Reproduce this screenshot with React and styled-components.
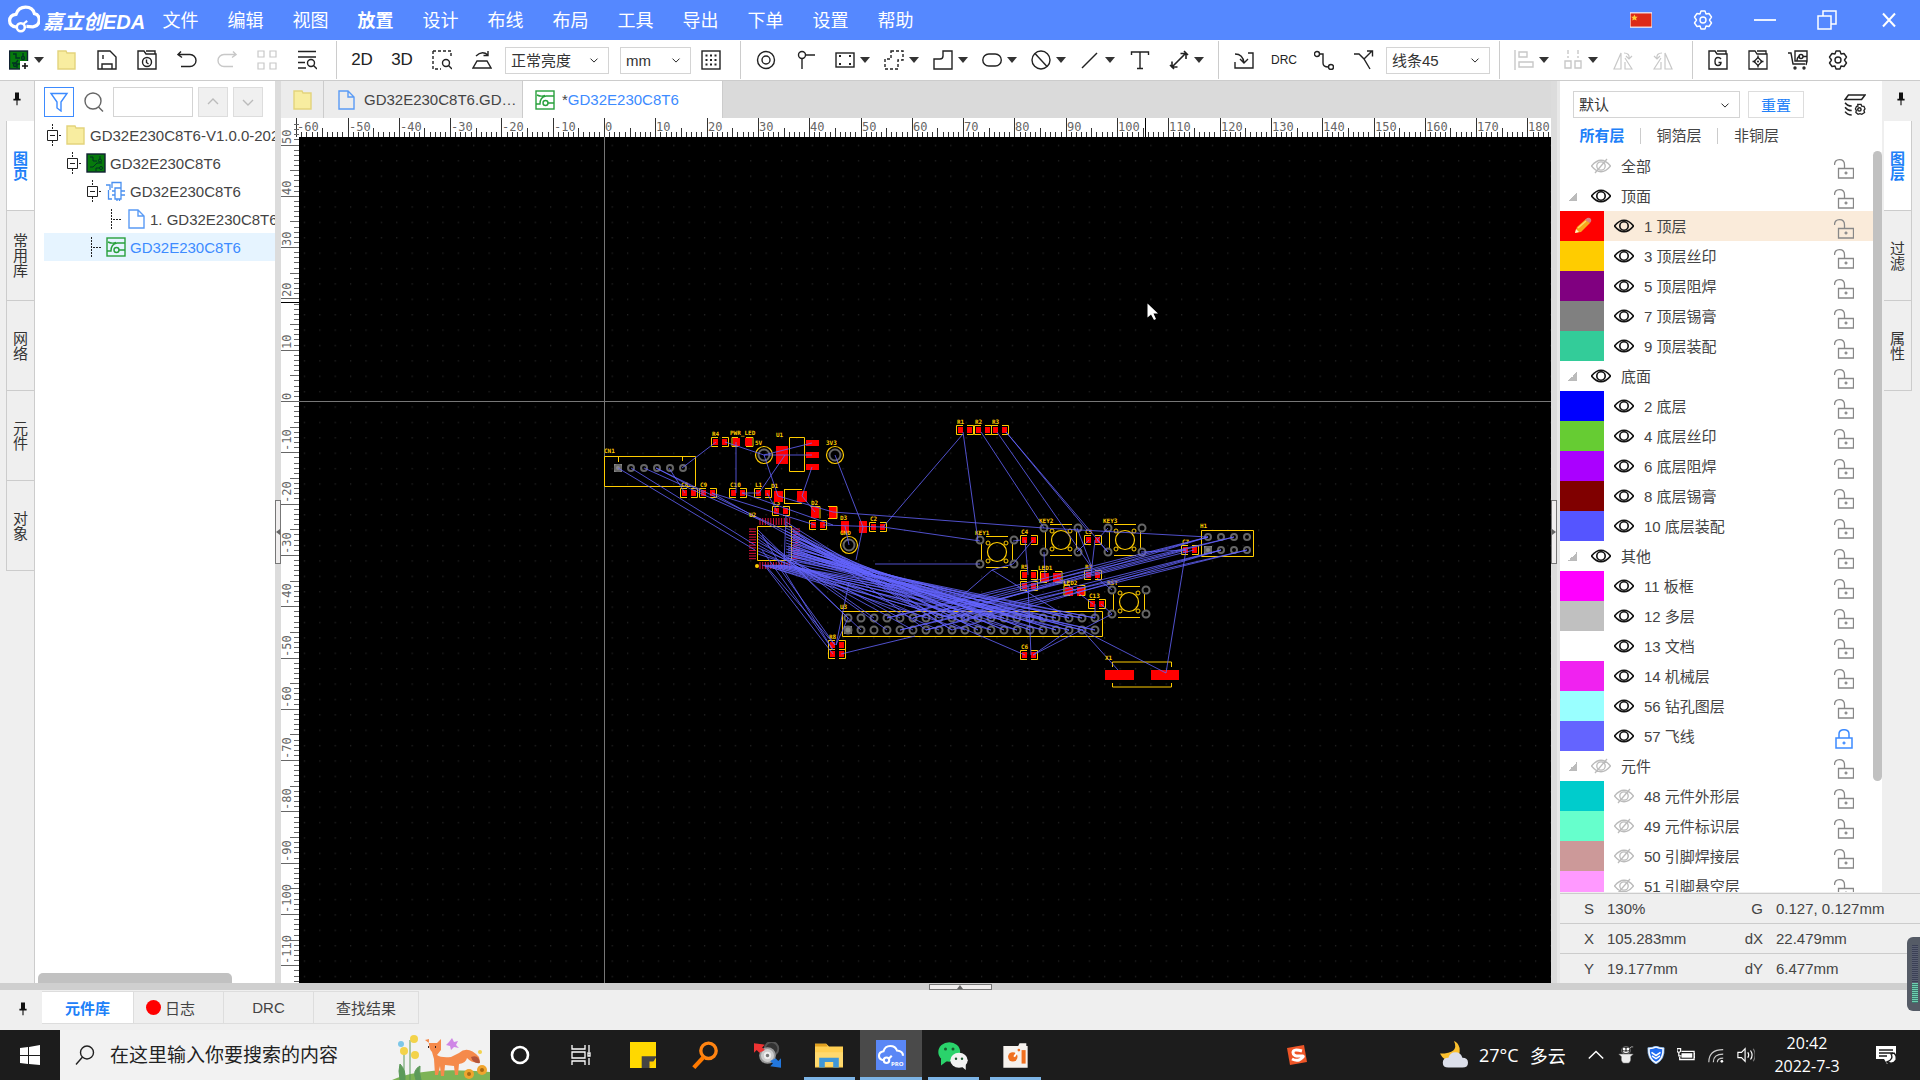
import React, { useState } from 'react';
import styled, { createGlobalStyle } from 'styled-components';

const GlobalStyle = createGlobalStyle`
* { box-sizing: border-box; }
body {
    margin: 0;
    overflow: hidden;
    font-family: "Liberation Sans", "Noto Sans CJK SC", sans-serif;
    font-size: 15px;
    color: #444;
    background: #efefef;
}
button, input, select {
    font-family: inherit;
    font-size: inherit;
    color: inherit;
}
button {
    border: 0;
    padding: 0;
    background: none;
}
ul {
    list-style: none;
    margin: 0;
    padding: 0;
}
svg { display: block; flex: none; }
`

const Page = styled.div`
display: flex;
flex-direction: column;
height: 100vh;
`

/* title bar */
const TitleBar = styled.header`
display: flex;
align-items: center;
height: 40px;
flex: none;
background: #5588ff;
color: white;
`
const Logo = styled.div`
display: flex;
align-items: center;
gap: 3px;
width: 148px;
padding-left: 8px;
font-size: 20px;
font-weight: bold;
font-style: italic;
white-space: nowrap;
`
const MenuItem = styled.button`
width: 65px;
height: 40px;
padding-bottom: 3px;
font-size: 18px;
font-weight: ${p => p.$active ? 'bold' : 'normal'};
`
const WindowButtons = styled.div`
display: flex;
margin-left: auto;
`
const WindowButton = styled.button`
display: grid;
place-items: center;
width: 62px;
height: 40px;
`

/* toolbar */
const Toolbar = styled.div`
display: flex;
align-items: center;
height: 41px;
flex: none;
background: white;
border-bottom: 1px solid #ccc;
color: #222;
`
const Tool = styled.button`
display: grid;
place-items: center;
width: 40px;
height: 36px;
flex: none;
font-size: ${p => p.$small ? '12px' : '17px'};
color: ${p => p.$off ? '#c8c8c8' : '#222'};
`
const MenuTool = styled.button`
display: flex;
align-items: center;
gap: 5px;
height: 36px;
flex: none;
padding: 0 ${p => p.$tight ? '3px' : '5px'} 0 9px;
color: ${p => p.$off ? '#c8c8c8' : '#222'};
`
const Caret = styled.span`
border: 5px solid transparent;
border-top: 6px solid #333;
border-bottom: 0;
`
const Divider = styled.span`
width: 1px;
height: 38px;
margin: 0 5px 0 9px;
background: #ccc;
flex: none;
`
const SelectWrap = styled.label`
display: flex;
align-items: center;
position: relative;
flex: none;
width: ${p => p.$w}px;
margin-left: ${p => p.$gap || 0}px;
svg { position: absolute; right: 8px; pointer-events: none; }
`
const Select = styled.select`
appearance: none;
width: 100%;
height: 27px;
padding: 0 5px;
border: 1px solid #d4d4d4;
background: white;
color: #333;
`

/* main area */
const Main = styled.div`
display: flex;
flex: 1;
min-height: 0;
`
const SideTabs = styled.nav`
display: flex;
flex-direction: column;
flex: none;
width: ${p => p.$right ? '38px' : '35px'};
padding: ${p => p.$right ? '0 8px 0 2px' : '0 0 0 6px'};
background: #efefef;
border-right: ${p => p.$right ? '0' : '1px solid #ccc'};
`
const PinBox = styled.button`
display: grid;
place-items: center;
height: 40px;
width: 28px;
padding: ${p => p.$right ? '0 0 6px 6px' : '0 7px 6px 0'};
`
const SideTab = styled.button`
display: grid;
place-items: center;
height: 90px;
width: 28px;
padding-right: 3px;
border: solid #ccc;
border-width: 0 ${p => p.$right ? '1px' : 0} 1px ${p => p.$right ? 0 : '1px'};
background: ${p => p.$active ? 'white' : '#efefef'};
color: ${p => p.$active ? '#2080f8' : '#333'};
font-weight: ${p => p.$active ? 'bold' : 'normal'};
writing-mode: vertical-rl;
text-orientation: upright;
line-height: 16px;
`
const TreePanel = styled.aside`
display: flex;
flex-direction: column;
width: 240px;
flex: none;
padding: 6px 0 0 9px;
background: white;
overflow: hidden;
`
const TreeSearch = styled.div`
display: flex;
align-items: center;
gap: 5px;
height: 30px;
margin-bottom: 4px;
`
const FilterButton = styled.button`
display: grid;
place-items: center;
width: 30px;
height: 30px;
border: 1px solid #3d8bff;
color: #3d8bff;
`
const SearchIcon = styled.span`
padding: 0 4px 0 5px;
color: #666;
`
const SearchBox = styled.input`
width: 80px;
height: 30px;
border: 1px solid #d4d4d4;
`
const StepButton = styled.button`
display: grid;
place-items: center;
width: 30px;
height: 30px;
background: #f0f0f0;
border: 1px solid #ddd;
color: #bbb;
`
const TreeRow = styled.li`
display: flex;
align-items: center;
gap: 4px;
height: 28px;
padding-left: ${p => 2 + p.$level * 20}px;
white-space: nowrap;
background: ${p => p.$active ? '#e6f4ff' : 'white'};
color: ${p => p.$active ? '#3d8bff' : '#444'};
`
const ScrollX = styled.div`
width: 84%;
height: 10px;
margin: auto 0 0 -6px;
background: #c1c1c1;
border-radius: 5px 5px 0 0;
`
const Splitter = styled.div`
display: grid;
place-items: center;
width: ${p => p.$w}px;
flex: none;
background: #dcdcdc;
border-right: ${p => p.$w > 6 ? '3px solid #e8e8e8' : '0'};
`
const Handle = styled.button`
display: grid;
place-items: center;
width: ${p => p.$flat ? '63px' : '6px'};
height: ${p => p.$flat ? '6px' : '64px'};
border: 1px solid #777;
background: #f0eeee;
`
const Arrow = styled.span`
border: 3px solid transparent;
${p => p.$dir === 'left' && 'border-right: 4px solid #666; border-left: 0;'}
${p => p.$dir === 'right' && 'border-left: 4px solid #666; border-right: 0;'}
${p => p.$dir === 'up' && 'border-bottom: 4px solid #666; border-top: 0;'}
`

/* document area */
const Work = styled.section`
display: flex;
flex-direction: column;
flex: 1;
min-width: 0;
`
const DocTabs = styled.div`
display: flex;
height: 37px;
flex: none;
background: #dadada;
`
const DocTab = styled.button`
display: flex;
align-items: center;
gap: ${p => p.$active ? '7px' : '8px'};
width: ${p => p.$w}px;
padding-left: 12px;
white-space: nowrap;
border-right: 1px solid #ccc;
background: ${p => p.$active ? 'white' : '#ececec'};
em { font-style: normal; color: #3d8bff; }
`
const Sheet = styled.div`
display: grid;
grid-template: 19px 1fr / 18px 1fr;
flex: 1;
min-height: 0;
overflow: hidden;
background: white;
font-family: "DejaVu Sans Mono", monospace;
font-size: 12px;
svg { width: 100%; height: 100%; }
`
const TopRuler = styled.svg`
grid-column: 1 / 3;
`
const SideRuler = styled.svg`
overflow: visible;
`
const Board = styled.svg`
background: black;
font-weight: bold;
z-index: 1;
`

/* layer panel */
const LayerPanel = styled.aside`
display: flex;
flex-direction: column;
width: 322px;
flex: none;
background: white;
`
const LayerTop = styled.div`
display: flex;
align-items: center;
gap: 8px;
height: 27px;
margin: 10px 0 4px 13px;
color: #222;
`
const ResetButton = styled.button`
width: 56px;
height: 27px;
margin-right: 32px;
border: 1px solid #ddd;
color: #2080f8;
`
const LayerTabs = styled.div`
display: flex;
align-items: center;
height: 29px;
padding: 0 0 2px 4px;
`
const LayerTab = styled.button`
width: 77px;
height: 16px;
line-height: 16px;
border-right: ${p => p.$last ? 0 : '1px solid #ccc'};
color: ${p => p.$active ? '#2080f8' : '#444'};
font-weight: ${p => p.$active ? 'bold' : 'normal'};
`
const LayerScroll = styled.div`
display: flex;
flex: 1;
min-height: 0;
overflow: hidden;
`
const LayerList = styled.ul`
flex: 1;
`
const LayerRow = styled.li`
display: flex;
align-items: center;
height: 30px;
padding-right: 19px;
background: ${p => p.$active ? '#faebda' : 'white'};
`
const Swatch = styled.span`
display: grid;
place-items: center;
width: 44px;
height: 30px;
background: ${p => p.$color};
`
const Fold = styled.span`
width: 21px;
padding-left: 8px;
i {
    display: block;
    width: 9px;
    height: 9px;
    background: linear-gradient(135deg, transparent 50%, #bbb 50%);
}
`
const EyeButton = styled.button`
display: grid;
place-items: center;
width: 40px;
height: 30px;
padding-bottom: 1px;
color: ${p => p.$off ? '#bbb' : '#111'};
`
const LayerName = styled.span`
padding-bottom: 2px;
`
const LockButton = styled.button`
margin-left: auto;
padding-top: 6px;
color: ${p => p.$locked ? '#3d8bff' : '#888'};
`
const ScrollY = styled.div`
width: 9px;
height: 85%;
background: #c1c1c1;
border-radius: 5px;
`
const RightColumn = styled.div`
display: flex;
flex-direction: column;
flex: none;
`
const RightTop = styled.div`
display: flex;
flex: 1;
min-height: 0;
`
const Status = styled.dl`
display: grid;
grid-template-columns: 37px 120px 49px 1fr;
margin: 0;
padding-top: 1px;
background: #efefef;
dt, dd {
    margin: 0;
    line-height: 29px;
    border-top: 1px solid #ccc;
}
dt { text-align: right; padding-right: 3px; }
dd { padding-left: 10px; }
`

/* bottom */
const BottomSplit = styled.div`
display: flex;
justify-content: center;
align-items: center;
height: 7px;
flex: none;
background: #cfcfcf;
`
const BottomTabs = styled.div`
display: flex;
height: 40px;
flex: none;
padding: 1px 0 6px 0;
background: #efefef;
`
const BottomPin = styled.button`
display: grid;
place-items: center;
width: 42px;
padding-left: 4px;
`
const BottomTab = styled.button`
display: flex;
justify-content: center;
align-items: center;
gap: 4px;
width: ${p => p.$w}px;
padding-bottom: 1px;
border: 1px solid #ddd;
border-left: 0;
background: ${p => p.$active ? 'white' : '#efefef'};
color: ${p => p.$active ? '#2080f8' : '#444'};
font-weight: ${p => p.$active ? 'bold' : 'normal'};
`
const RedDot = styled.i`
width: 15px;
height: 15px;
border-radius: 50%;
background: #f00;
margin-left: -16px;
`
const Taskbar = styled.footer`
display: flex;
height: 50px;
flex: none;
background: #1c1c1c;
color: white;
font-family: "Open Sans", "Noto Sans CJK SC", sans-serif;
`
const TaskButton = styled.button`
display: grid;
place-items: center;
width: ${p => p.$w || 62}px;
height: 50px;
background: ${p => p.$active ? '#4a4a4a' : 'none'};
box-shadow: ${p => p.$active ? 'inset 0 -3px #7cb4e6' : 'none'};
`
const RunMark = styled.span`
display: grid;
place-items: center;
width: 51px;
height: 50px;
border-bottom: 3px solid #7cb4e6;
padding-top: 3px;
`
const SearchField = styled.label`
display: flex;
align-items: center;
width: 430px;
padding-left: 15px;
background: #f2f2f2;
color: #222;
font-size: 19px;
input {
    flex: 1;
    min-width: 0;
    height: 40px;
    margin-left: 15px;
    padding: 0;
    border: 0;
    background: none;
}
input::placeholder { color: #222; opacity: 1; }
`
const Tray = styled.div`
display: flex;
align-items: center;
margin-left: auto;
font-size: 18px;
`
const TraySpace = styled.span`
width: 113px;
`
const TrayButton = styled.button`
display: grid;
place-items: center;
width: 30px;
height: 50px;
`
const Weather = styled.div`
display: flex;
align-items: center;
gap: 11px;
width: 141px;
white-space: nowrap;
`
const Clock = styled.time`
width: 90px;
margin-left: 1px;
font-size: 16px;
line-height: 23px;
text-align: center;
`
const Meter = styled.div`
position: fixed;
right: 0;
bottom: 69px;
width: 13px;
height: 74px;
padding: 8px 2px 8px 5px;
border-radius: 6px 0 0 6px;
background: #555b66;
i {
    display: block;
    height: 100%;
    background: repeating-linear-gradient(#3b4055 0 1px, #5a5f72 1px 2px);
}
i::after {
    content: '';
    display: block;
    height: 20px;
    transform: translateY(38px);
    background: repeating-linear-gradient(#6fd0b0 0 1px, #3d7a70 1px 2px);
}
`
const Green = styled.span`
color: #28a03c;
`

const ICONS = {
    newBoard: <>
        <rect x="0.5" y="1" width="18" height="18" fill="#067a0c" stroke="#123" />
        <path d="M4 4h3v4h4M14 3v4M3 13h4l2-3M8 18v-4h3" stroke="#032" />
        <circle cx="14" cy="8" r="1.5" stroke="#032" />
        <circle cx="6" cy="15" r="1.5" stroke="#032" />
        <path d="M11 11h9v9h-9z" fill="white" stroke="none" />
        <path d="M16 13v6M13 16h6" strokeWidth="1.6" stroke="#111" />
    </>,
    board: <>
        <rect x="1" y="1" width="18" height="18" fill="#067a0c" stroke="#123" />
        <path d="M4 4h3v4h4M14 3v3M4 14h3l4-4h5M10 18v-3h3" stroke="#032" strokeWidth="1" />
        <circle cx="14" cy="7.5" r="1.5" stroke="#032" strokeWidth="1" />
        <circle cx="15" cy="15" r="1.5" stroke="#032" strokeWidth="1" />
    </>,
    folder: <path d="M1 4V1h8l1 2h8v16H1z" fill="#f8eda0" stroke="#e3d37c" />,
    save: <path d="M1 1h12l6 6v12H1zM5 19v-5h10v5M6 5v4" />,
    history: <>
        <path d="M1 19V1h6l2 3h10v15zM9 1h9v3" />
        <circle cx="10" cy="12" r="4.5" />
        <path d="M9.5 9.5v3l2 1.500" />
    </>,
    undo: <path d="M4 1.500L1 4.500l4 3M1 4.500h12a6 6 0 0 1 0 12H4" />,
    redo: <path d="M16 1.500l3 3-4 3M19 4.500H7a6 6 0 0 0 0 12h9" />,
    tiles: <path d="M1 1h6v6H1zM13 1h6v6h-6zM1 13h6v6H1zM13 13h6v6h-6z" strokeWidth="1.200" />,
    find: <>
        <path d="M1 1.500h18M1 7h18M1 12.500h7M1 18h8" />
        <circle cx="14" cy="13" r="3.500" />
        <path d="M16.500 15.500L20 19" />
    </>,
    marquee: <>
        <path d="M1 1h18v7M1 1v18h8" strokeDasharray="3 2" />
        <circle cx="14" cy="13" r="3.500" />
        <path d="M16.500 15.500L20 19" />
    </>,
    rotate: <path d="M5 11h10l4 7H1zM4 6q6-6 12-1M16 1v4.500h-4.500" />,
    grid: <>
        <rect x="1" y="1" width="18" height="18" />
        <path d="M4.500 5.500h11M4.500 10h11M4.500 14.500h11" strokeWidth="2" strokeDasharray="2 2.500" />
    </>,
    via: <><circle cx="10" cy="10" r="8.500" /><circle cx="10" cy="10" r="4" /></>,
    pad: <><circle cx="6" cy="5" r="3.500" /><path d="M6 8.500V19M9.500 5H19" /></>,
    fill: <>
        <rect x="1" y="3" width="18" height="14" />
        <path d="M4 6h2M14 6h2M4 14h2M14 14h2" strokeWidth="2" />
    </>,
    dashedPoly: <path d="M7 1h12v9h-5v9H1V9h6z" strokeDasharray="3 2" />,
    poly: <path d="M10 1h9v18H1V9h6q3 0 3-3z" />,
    round: <rect x="0.800" y="4" width="18.500" height="12" rx="6" />,
    forbid: <><circle cx="10" cy="10" r="9" /><path d="M4 3.500l12 13" /></>,
    line: <path d="M2 18L17 3" />,
    text: <path d="M1.500 5V2h17v3M10 2v16M7 18.500h6" />,
    measure: <path d="M3 17L17 3M11.500 3.500H17V9M3 11.500V17h5.500M1 15l4 4M15 1l4 4" strokeWidth="1.600" />,
    importIn: <path d="M1 12v6h18V3h-5M1 4q8 0 9 9M6 9l4 4 4-4" />,
    route: <>
        <circle cx="3" cy="4" r="2.500" /><circle cx="17" cy="17" r="2.500" />
        <path d="M5.500 4H9v9q0 4 5.500 4" />
    </>,
    branch: <path d="M0 4h5l5 5 6 10M10 9l8-8M13 1h5.500v5.500" />,
    align: <path d="M1 0v20M5 2h8v5H5zM5 12h14v5H5z" />,
    distribute: <path d="M2 11h6v7H2zM12 11h6v7h-6zM5 0v4M15 0v4M5 6v2M15 6v2" />,
    flipL: <path d="M8 3v16H1zM12 12v7h7L12 8M11 3q6 0 5 6M13 6l3 3 3-3" strokeWidth="1.200" />,
    flipR: <path d="M12 3v16h7zM8 12v7H1L8 8M9 3q-6 0-5 6M7 6L4 9 1 6" strokeWidth="1.200" />,
    gerber: <path d="M1 19V1h6l2 3h10v15zM9 1h9v3M13 9q-1-1.500-3-1.500-3 0-3 4t3 4q3 0 3-3h-2.500" />,
    target: <>
        <path d="M1 19V1h6l2 3h10v15zM9 1h9v3M10 5.500v3M10 14.500v3M4.500 11.500h3M12.500 11.500h3" strokeWidth="1.300" />
        <path d="M10 7.500l4 4-4 4-4-4z" strokeWidth="1.300" />
        <circle cx="10" cy="11.500" r="1" fill="#222" stroke="none" />
    </>,
    cart: <>
        <path d="M0 3h3l2 11h12M7 1h12v10H7zM19 11l-1 4" />
        <circle cx="13" cy="6.500" r="2" /><path d="M15 6.500h4M9 11q0-4 3-5" />
        <circle cx="7" cy="18" r="1" /><circle cx="16" cy="18" r="1" />
    </>,
    gear: <>
        <path d="M8 1h4l1 3 3-.5 2.500 3.500-2 3 2 3-2.500 3.500-3-.5-1 3H8l-1-3-3 .5L1.500 13l2-3-2-3L4 3.500 7 4z" strokeLinejoin="round" />
        <circle cx="10" cy="10" r="3" />
    </>,
    layers: <>
        <path d="M1 5l3-4h15l-3 4zM1 8q2 3 6 3M1 12q2 3 6 3M1 16q2 3 6 3" />
        <circle cx="14" cy="14" r="1.500" />
        <path d="M12.500 9.500h3l.6 1.500 2 .2 1 2.300-1 1.300.6 2-2.500 1.700-1.700-.6-1.700.6-2-1.700.4-2-.8-1.300 1-2.300 1.300-.2z" strokeWidth="1.200" />
    </>,
    filter: <path d="M2 1.500h16l-6 8.500v9l-4-3v-6z" />,
    search: <><circle cx="9" cy="9" r="8" /><path d="M14.500 15L19 19.500" /></>,
    up: <path d="M5 12l5-5 5 5" />,
    down: <path d="M5 8l5 5 5-5" />,
    file: <path d="M3 1h9l6 6v12H3zM12 1v6h6" stroke="#5a9bf5" />,
    sch: <path d="M6 7V1.500h9V7M0 4h4v5M2.500 9v9H6M9 7h6v11H9zM6 10h3M6 14h3M15 10h4M15 14h4M11 18v2M13.500 18v2" stroke="#4a90f0" strokeWidth="1.300" />,
    pcb: <>
        <rect x="1" y="1" width="18" height="18" />
        <path d="M1 14h4q0-7 6-8h8M2 5q4 2 8 .5M13 13h6" />
        <circle cx="10.500" cy="13" r="2.500" />
    </>,
    eye: <><path d="M0.500 10Q10-1.500 19.500 10 10 21.500.500 10z" strokeWidth="1.600" /><circle cx="10" cy="10" r="4.200" strokeWidth="1.600" /></>,
    eyeOff: <><path d="M0.500 10Q10-1.500 19.500 10 10 21.500.500 10zM4 17L16 3" strokeWidth="1.300" /><circle cx="10" cy="10" r="4.200" strokeWidth="1.300" /></>,
    unlock: <><path d="M4.500 9.500h15v9.500h-15zM0.500 6q0-5.300 5-5.300t5 5.300v3.500" strokeWidth="1.300" /><path d="M12 12.500v3M10.500 14h3" /></>,
    lock: <><path d="M2 9h16v10H2zM5 9V5q0-4.300 5-4.300T15 5v4" strokeWidth="1.500" /><path d="M10 12.500v3M8.500 14h3" /></>,
    pin: <><path d="M7.500 3h5v8h2v2h-9v-2h2z" fill="#111" stroke="none" /><path d="M10 12v7" stroke="#111" /></>,
    cloud: <>
        <path d="M5.500 14.500Q1 14 1 10.500T5 6.500Q6.500 2 11 2t5.500 4q3 .5 3 4t-4 4.300l-4-.3" strokeWidth="2" />
        <circle cx="8" cy="14.500" r="2.500" strokeWidth="1.600" /><path d="M9.500 12.500l2.500-2" />
    </>,
    minimize: <path d="M0 10h20" strokeWidth="1.600" />,
    restore: <path d="M1 6h13v13H1zM6 6V1h13v13h-5" strokeWidth="1.500" />,
    close: <path d="M4 3.500l12 13M16 3.500l-12 13" strokeWidth="2" />,
    flag: <><rect x="0" y="3.500" width="20" height="13" fill="#dd2a18" stroke="#fff" strokeWidth="1" /><path d="M4 5l1 2h2l-1.500 1.500.5 2L4 9.500 2 10.500l.5-2L1 7h2z" fill="#fc3" stroke="none" /></>,
    windows: <path d="M0 3l8-1v8H0zM9 2l11-2v10H9zM0 11h8v8l-8-1zM9 11h11v9L9 19z" fill="#fff" stroke="none" />,
    magnify: <><circle cx="12" cy="7.500" r="6.500" /><path d="M7.500 12L1 19.500" /></>,
    cortana: <circle cx="10" cy="10" r="8" strokeWidth="2.600" />,
    taskView: <path d="M1 0v4h13V0M1 20v-4h13v4M1 7h13v6H1zM18 0v7M18 13v7M17 8h2v3h-2z" strokeWidth="1.300" />,
    chevUp: <path d="M2 14l8-8 8 8" strokeWidth="1.600" />,
    penguin: <>
        <ellipse cx="10" cy="5" rx="5" ry="4.500" fill="#333" stroke="#999" strokeWidth="0.600" />
        <path d="M14 3q1-3 4-2" stroke="#aaa" strokeWidth="1" />
        <path d="M2 9h16l-3 3q1 5-2 7H7q-3-2-2-7z" fill="#eee" stroke="#777" strokeWidth="0.600" />
        <path d="M7 6q3 2 6 0" stroke="#fff" /><circle cx="8" cy="3.500" r="0.800" fill="#fff" /><circle cx="12" cy="3.500" r="0.800" fill="#fff" />
    </>,
    shield: <>
        <path d="M10 0q4 2 9 2 1 13-9 18Q0 15 1 2q5 0 9-2z" fill="#fff" stroke="#8bc0ff" strokeWidth="0.800" />
        <path d="M10 2q3 1.500 7 1.500.5 10-7 14-7.500-4-7-14Q7 3.500 10 2z" fill="#1f6cf0" stroke="none" />
        <path d="M5 7l5 3.500L15 7M5.500 11l4.500 3 4.500-3" stroke="#fff" strokeWidth="1.800" />
    </>,
    battery: <><path d="M5 6h14v9H3v-3M19 8.500h1.500v4H19" /><path d="M5 8h12v5H5z" fill="#fff" stroke="none" /><path d="M0 3h4v3q-2 2-4 0zM2 7v4h3" /></>,
    wifi: <><path d="M2 18Q2 4 18 4M7 18q0-9 11-9M11.500 18q0-4.500 6.500-4.500" strokeWidth="1.300" stroke="#ccc" /><circle cx="16.500" cy="17" r="1.500" fill="#fff" stroke="none" /></>,
    speaker: <><path d="M1 7h4l4-4v14l-4-4H1zM12 7q2 3 0 6M15 5q3.500 5 0 10" strokeWidth="1.300" /><path d="M18 3q4.500 7 0 14" strokeWidth="1.300" stroke="#777" /></>,
    notice: <><path d="M0 1h20v13h-5l-4 5-3-5H0z" fill="#fff" stroke="none" /><path d="M3 5h14M3 8h14M3 11h8" stroke="#1c1c1c" /><path d="M15 9q3 5-4 8 6 3 9-2 1-4-2-7z" fill="#fff" stroke="#1c1c1c" /></>,
    note: <><path d="M0 0h20v20H0z" fill="#ffd800" stroke="none" /><path d="M9 20v-9h11v1l-5 8z" fill="#444" stroke="none" /><path d="M15 20v-5h5z" fill="#fc0" stroke="none" /></>,
    everything: <><circle cx="12.500" cy="7" r="5.500" stroke="#ff8412" strokeWidth="2.400" /><path d="M9 11.500L2 19" stroke="#ff7a00" strokeWidth="3" /></>,
    sync: <>
        <circle cx="13" cy="5" r="5" fill="#333" stroke="#555" />
        <circle cx="10" cy="10" r="5.500" fill="#ccc" stroke="#999" /><circle cx="10" cy="10" r="2" fill="#777" stroke="#eee" />
        <path d="M0 1l8 1-2 2 2 2-4 2-2-2-2 2z" fill="#e33" stroke="none" />
        <path d="M20 19l-8-1 2-2-2-2 4-2 2 2 2-2z" fill="#27d" stroke="none" />
    </>,
    explorer: <>
        <path d="M0 2h8l2 2h10v15H0z" fill="#ffcf52" stroke="none" /><path d="M0 2h8l1 2H0z" fill="#e0a020" stroke="none" />
        <path d="M0 8h20v10H0z" fill="#ffd96e" stroke="none" />
        <path d="M3 19v-7h14v7h-4v-4H7v4z" fill="#3f97d8" stroke="none" />
    </>,
    edaPro: <>
        <rect width="20" height="20" fill="#5a87f6" stroke="none" />
        <path d="M5 13.500q-3-.5-3-3t3-3Q6 4 9.500 4T14 7q4 .5 4 3.500" stroke="#fff" />
        <circle cx="7" cy="13.500" r="1.800" stroke="#fff" /><path d="M8.500 12.500l2-2" stroke="#fff" />
        <text x="10" y="17" fontSize="4" fontWeight="bold" fill="#fff" stroke="none">PRO</text>
    </>,
    wechat: <>
        <ellipse cx="7.500" cy="8" rx="7.300" ry="6.500" fill="#2ad36b" stroke="none" /><path d="M2 12v5l4-3z" fill="#2ad36b" stroke="none" />
        <ellipse cx="14" cy="13.500" rx="5.800" ry="5" fill="#f2f2f2" stroke="none" /><path d="M15 17l3.500 3v-4z" fill="#f2f2f2" stroke="none" />
        <g fill="#1a5a30" stroke="none"><circle cx="5" cy="6" r="1" /><circle cx="10" cy="6" r="1" /><circle cx="12" cy="12.500" r="0.800" /><circle cx="16" cy="12.500" r="0.800" /></g>
    </>,
    camera: <>
        <path d="M1 3h11l1-2h5v2h1v16H1z" fill="#f6f2ee" stroke="none" />
        <circle cx="8" cy="11" r="3.500" fill="#f07020" stroke="none" /><path d="M11 8l-2 3" stroke="#fff" />
        <path d="M14.500 6h3v10h-3z" fill="#f07020" stroke="none" /><circle cx="12.500" cy="6" r="1" fill="#f07020" stroke="none" />
    </>,
    sogou: <>
        <path d="M0 3l17-3 3 17-17 3z" fill="#ee5527" stroke="none" />
        <path d="M15 6Q6 3.500 6 7.500T13 11t-1 4q-3 1-7-1" stroke="#fff" strokeWidth="3" />
    </>,
    moon: <>
        <path d="M10 0q4 9-10 9 3 6 9 5 6-3 5-9Q13 1 10 0z" fill="#fbc02d" stroke="none" />
        <path d="M6 19q-4 0-4-3.500T6 12q1-4 5-4t5 4q4 0 4 3.500T16 19z" fill="#dcdfea" stroke="none" />
    </>,
    pencil: <>
        <path d="M3 17l2-6L14 3l4 4-9 9z" fill="#f7a71c" stroke="none" />
        <path d="M13 4l2-2q2-1 4 1 1 2-1 4z" fill="#d98080" stroke="none" />
        <path d="M3 17l1-4 3 3z" fill="#fff0c8" stroke="none" /><path d="M6 12l8-7" stroke="#ffd76a" />
    </>,
}

const Icon = ({ name, size = 20 }) => (
    <svg width={size} height={size} viewBox="0 0 20 20" fill="none" stroke="currentColor" strokeWidth="1.4" aria-hidden="true">
        {ICONS[name]}
    </svg>
)

const PcbIcon = () => <Green><Icon name="pcb" /></Green>

const Dropdown = ({ label, value, width, gap }) => (
    <SelectWrap $w={width} $gap={gap}>
        <Select aria-label={label} defaultValue={value}>
            <option>{value}</option>
        </Select>
        <Icon name="down" size={14} />
    </SelectWrap>
)

const MENU = ['文件', '编辑', '视图', '放置', '设计', '布线', '布局', '工具', '导出', '下单', '设置', '帮助']

const DRAW_TOOLS = ['fill', 'dashedPoly', 'poly', 'round', 'forbid', 'line']

const LAYERS = [
    { name: '全部', group: true, top: true, off: true },
    { name: '顶面', group: true },
    { name: '1 顶层', color: '#ff0000' },
    { name: '3 顶层丝印', color: '#ffcc00' },
    { name: '5 顶层阻焊', color: '#800080' },
    { name: '7 顶层锡膏', color: '#808080' },
    { name: '9 顶层装配', color: '#33cc99' },
    { name: '底面', group: true },
    { name: '2 底层', color: '#0000ff' },
    { name: '4 底层丝印', color: '#66cc33' },
    { name: '6 底层阻焊', color: '#aa00ff' },
    { name: '8 底层锡膏', color: '#800000' },
    { name: '10 底层装配', color: '#5555ff' },
    { name: '其他', group: true },
    { name: '11 板框', color: '#ff00ff' },
    { name: '12 多层', color: '#c0c0c0' },
    { name: '13 文档', color: '#ffffff' },
    { name: '14 机械层', color: '#f022f0' },
    { name: '56 钻孔图层', color: '#99ffff' },
    { name: '57 飞线', color: '#6464ff', locked: true },
    { name: '元件', group: true, off: true },
    { name: '48 元件外形层', color: '#00cccc', off: true },
    { name: '49 元件标识层', color: '#66ffcc', off: true },
    { name: '50 引脚焊接层', color: '#cc9999', off: true },
    { name: '51 引脚悬空层', color: '#ff99ff', off: true },
]

/* rulers: one millimetre is UNIT pixels on screen */
const UNIT = 5.13
const range = (a, b) => Array.from({ length: b - a + 1 }, (_, i) => a + i)

function HorizontalRuler() {
    return (
        <TopRuler>
            {range(-60, 400).map(n => {
                const x = Math.round(323 + n * UNIT) + 0.5
                const len = n % 10 === 0 ? 19 : n % 5 === 0 ? 9 : 5
                return <path key={n} d={`M${x} 19v${-len}`} stroke="#333" />
            })}
            {range(-6, 18).map(n => (
                <text key={n} x={Math.round(324 + n * 10 * UNIT)} y="13" fill="#666">{n * 10}</text>
            ))}
            <path d="M864.5 0v19" stroke="#000" />
        </TopRuler>
    )
}

function VerticalRuler() {
    return (
        <SideRuler>
            {range(-200, 54).map(n => {
                const y = Math.round(264 - n * UNIT) + 0.5
                const len = n % 10 === 0 ? 18 : n % 5 === 0 ? 9 : 5
                return <path key={n} d={`M18 ${y}h${-len}`} stroke="#666" />
            })}
            {range(-11, 5).map(n => (
                <text key={n} transform={`translate(10 ${Math.round(263 - n * 10 * UNIT)}) rotate(-90)`} fill="#666">{n * 10}</text>
            ))}
            <path d="M0 165.5h18" stroke="#000" />
        </SideRuler>
    )
}

/* board parts, in screen pixels */
const CHIPS = [
    [720, 442, 'R4'], [689, 493, 'C8'], [708, 493, 'C9'], [738, 493, 'C10'], [763, 493, 'L1'],
    [781, 511, 'C3'], [818, 525, ''], [878, 527, 'C2'], [837, 645, 'R8'], [837, 654, ''],
    [965, 430, 'R1'], [983, 430, 'R2'], [1000, 430, 'R3'], [1029, 540, 'C4'], [1093, 540, 'C5'],
    [1029, 575, 'R5'], [1029, 586, ''], [1093, 575, 'R7'], [1097, 604, 'C13'], [1190, 550, 'C7'],
    [1029, 655, 'C6'],
]

const PADS = [
    [733, 438, 7, 8], [745, 438, 7, 8], [776, 446, 12, 18], [806, 440, 13, 6], [806, 452, 13, 6], [806, 464, 13, 6],
    [774, 491, 9, 11], [797, 491, 10, 11], [811, 507, 8, 11], [829, 507, 8, 11], [841, 521, 8, 12], [859, 521, 8, 12],
    [1041, 573, 8, 9], [1053, 573, 8, 9], [1065, 587, 8, 9], [1077, 587, 8, 9],
    [1105, 670, 29, 10], [1151, 670, 28, 10],
]

const KEYS = [[997, 552, 'KEY1'], [1061, 540, 'KEY2'], [1125, 540, 'KEY3'], [1129, 602, 'RST']]

const TESTPOINTS = [[764, 455, '5V'], [835, 455, '3V3'], [849, 545, 'GND']]

const LABELS = [
    [604, 453, 'CN1'], [730, 435, 'PWR_LED'], [776, 437, 'U1'], [771, 488, 'D1'], [811, 505, 'D2'],
    [840, 520, 'D3'], [749, 517, 'U2'], [840, 609, 'U3'], [1038, 570, 'LED1'], [1063, 585, 'LED2'],
    [1200, 528, 'H1'], [1105, 660, 'X1'],
]

const HEADER_X = range(0, 19).map(i => 848 + i * 13)

const NETS = [
    [682, 468, 716, 442], [725, 442, 764, 455], [736, 442, 736, 493], [764, 455, 812, 443], [764, 455, 778, 496],
    [785, 455, 759, 493], [764, 455, 812, 455], [812, 467, 802, 496], [835, 455, 863, 527], [618, 468, 755, 550],
    [631, 468, 755, 545], [644, 468, 760, 520], [656, 468, 845, 560], [656, 468, 704, 493], [669, 468, 685, 493],
    [712, 493, 815, 525], [712, 493, 860, 575], [742, 493, 759, 493], [767, 493, 777, 511], [742, 493, 833, 525],
    [802, 496, 815, 512], [778, 496, 833, 512], [833, 512, 1044, 528], [1044, 528, 1208, 537], [883, 527, 980, 541],
    [823, 525, 883, 527], [883, 527, 963, 434], [849, 545, 845, 526], [863, 527, 856, 560], [849, 582, 836, 645],
    [963, 432, 978, 541], [981, 432, 1044, 528], [997, 432, 1092, 568], [1006, 432, 1108, 552], [1006, 432, 1087, 530],
    [875, 564, 980, 564], [1025, 540, 1028, 575], [1028, 586, 1031, 655], [1013, 564, 1033, 540], [1013, 541, 1021, 540],
    [1044, 552, 1045, 577], [1077, 552, 1089, 540], [1097, 540, 1108, 528], [1097, 540, 1108, 552], [1095, 540, 1091, 575],
    [1077, 528, 1091, 565], [1141, 552, 1186, 550], [1186, 550, 1166, 673], [1101, 604, 1112, 614], [1057, 577, 1093, 604],
    [1097, 578, 1112, 590], [1033, 655, 1069, 630], [1033, 655, 1112, 614], [1082, 630, 1166, 673], [1082, 630, 1118, 670],
    [953, 624, 1025, 655], [992, 570, 1069, 618], [940, 615, 992, 570], [841, 654, 915, 636], [836, 645, 848, 618],
    [786, 515, 784, 565], [1095, 604, 1095, 618], [833, 654, 765, 566], [1013, 564, 992, 570],
    ...[766, 778].map(x => [x, 566, 835, 645]),
    ...[535, 550].map(y => [762, y, 833, 650]),
    // the main fan: upper pins go to the near columns, lower pins to the far ones
    ...range(0, 13).map(i => [793, 530 + 2 * i, HEADER_X[6 + i], i % 2 ? 618 : 630]),
    ...range(0, 12).map(i => [786, 522 + 3 * i, HEADER_X[7 + i], i % 2 ? 630 : 618]),
    ...range(0, 11).map(i => [762 + 2 * i, 565, HEADER_X[8 + i], i % 2 ? 630 : 618]),
    ...range(0, 8).map(i => [788, 546 + 2 * i, HEADER_X[11 + i], i % 2 ? 618 : 630]),
    ...range(0, 8).map(i => [758, 530 + 3 * i, HEADER_X[i], i % 2 ? 630 : 618]),
    ...range(0, 9).map(i => [1208 + 13 * (i % 4), i % 2 ? 550 : 537, HEADER_X[3 + i % 6], i % 2 ? 630 : 618]),
    ...[1186, 1194].map(x => [x, 550, 948, 612]),
]

const Ring = ({ x, y, r = 3.5 }) => <circle cx={x} cy={y} r={r} fill="none" stroke="#666" strokeWidth="2" />

const Silk = ({ d }) => <path d={d} fill="none" stroke="#ffcc00" />

function Circuit() {
    return (
        <g transform="translate(-299 -137)">
            {CHIPS.map(([x, y, name], i) => (
                <g key={i}>
                    <rect x={x - 7} y={y - 3} width="5" height="6" fill="#f00" />
                    <rect x={x + 2} y={y - 3} width="5" height="6" fill="#f00" />
                    <Silk d={`M${x - 2} ${y - 4.5}h-6.500v9h6.500M${x + 2} ${y - 4.5}h6.500v9h-6.500`} />
                    <text x={x - 8} y={y - 6} fill="#ffcc00" fontSize="6">{name}</text>
                </g>
            ))}
            {PADS.map(([x, y, w, h]) => <rect key={`${x}-${y}`} x={x} y={y} width={w} height={h} fill="#f00" />)}
            <Silk d="M604.500 456.500h91v30h-91zM618.500 457v5M682.500 457v4" />
            <Silk d="M738 437.500h-6v9h6M746 437.500h7v9h-7M789.500 437.500h15v34h-15zM784 489.500h18M784 503.500h18M784.500 490v13" />
            <Silk d="M811 506.500h9v12M828 506.500h9v12h-9M757.500 526.500h34v34h-34z" />
            <Silk d="M842.500 611.500h260v25h-260zM1201.500 530.500h52v26h-52z" />
            <Silk d="M1047 571.500h-6.500v11h6.500M1055 571.500h7v11h-7M1070 585.500h-6v10h6M1079 585.500h6v10h-6" />
            <Silk d="M1112.500 667v-5h59v5M1112.500 683v4h59v-4" />
            <circle cx="757" cy="566" r="2" fill="#ffcc00" />
            {range(0, 11).map(i => (
                <path
                    key={i}
                    d={`M${760 + i * 2.7} 518v7M${760 + i * 2.7} 562v7M749 ${529 + i * 2.7}h7M792 ${529 + i * 2.7}h8`}
                    stroke="#e0103a"
                />
            ))}
            {TESTPOINTS.map(([x, y, name]) => (
                <g key={name}>
                    <circle cx={x} cy={y} r="8.5" fill="none" stroke="#ffcc00" strokeWidth="1.200" />
                    <Ring x={x} y={y} r={5.5} />
                    <text x={x - 9} y={y - 10} fill="#ffcc00" fontSize="6">{name}</text>
                </g>
            ))}
            {KEYS.map(([x, y, name]) => (
                <g key={name}>
                    <circle cx={x} cy={y} r="9.5" fill="none" stroke="#ffcc00" strokeWidth="1.200" />
                    {[[-9, -9], [9, -9], [-9, 9], [9, 9]].map(([a, b]) => (
                        <circle key={`${a}${b}`} cx={x + a} cy={y + b} r="2" fill="none" stroke="#ffcc00" />
                    ))}
                    <Silk d={`M${x - 11} ${y - 15.5}h22M${x - 11} ${y + 15.5}h22M${x - 15.5} ${y - 8}v16M${x + 15.5} ${y - 8}v16`} />
                    {[[-17, -12], [17, -12], [-17, 12], [17, 12]].map(([a, b]) => (
                        <Ring key={`${a}${b}`} x={x + a} y={y + b} />
                    ))}
                    <text x={x - 22} y={y - 17} fill="#ffcc00" fontSize="6">{name}</text>
                </g>
            ))}
            <rect x="614" y="464" width="8" height="8" fill="#888" />
            <rect x="844" y="626" width="8" height="8" fill="#888" />
            <rect x="1204" y="546" width="8" height="8" fill="#888" />
            {range(0, 5).map(i => <Ring key={i} x={618 + i * 13} y={468} r={3} />)}
            {HEADER_X.map(x => <g key={x}><Ring x={x} y={618} /><Ring x={x} y={630} /></g>)}
            {range(0, 3).map(i => <g key={i}><Ring x={1208 + i * 13} y={537} r={3} /><Ring x={1208 + i * 13} y={550} r={3} /></g>)}
            {NETS.map(([a, b, c, d], i) => (
                <path key={i} d={`M${a} ${b}L${c} ${d}`} stroke="#6464ff" strokeWidth="0.800" />
            ))}
            {LABELS.map(([x, y, name]) => <text key={name} x={x} y={y} fill="#ffcc00" fontSize="6">{name}</text>)}
        </g>
    )
}

function Canvas() {
    return (
        <Board>
            <defs>
                <pattern id="dots" width={UNIT * 3} height={UNIT * 3} patternUnits="userSpaceOnUse">
                    <rect x="5" y="8" width="1" height="1" fill="#3c3c3c" />
                </pattern>
            </defs>
            <rect width="100%" height="100%" fill="url(#dots)" />
            <path d="M305.500 0v3000M0 264.500h4000" stroke="#777" />
            <Circuit />
            <path d="M848.500 166.500v14l3.500-3 3 5.500 2-1-2.500-5.500h4.500z" fill="#fff" />
        </Board>
    )
}

const TreeBox = ({ leaf }) => (
    <svg width="16" height="28" viewBox="0 0 16 28" fill="none" stroke="#222" aria-hidden="true">
        <path d={leaf ? 'M5.500 4v20M7 14.500h9' : 'M6.500 3v6M6.500 20v5M13 14.500h3'} strokeDasharray="2 1" />
        {!leaf && <path d="M1.500 9.500h10v10h-10zM4 14.500h5" />}
    </svg>
)

const Tree = () => (
    <ul>
        <TreeRow $level={0}><TreeBox /><Icon name="folder" />GD32E230C8T6-V1.0.0-20220703</TreeRow>
        <TreeRow $level={1}><TreeBox /><Icon name="board" />GD32E230C8T6</TreeRow>
        <TreeRow $level={2}><TreeBox /><Icon name="sch" />GD32E230C8T6</TreeRow>
        <TreeRow $level={3}><TreeBox leaf /><Icon name="file" />1. GD32E230C8T6</TreeRow>
        <TreeRow $level={2} $active><TreeBox leaf /><PcbIcon />GD32E230C8T6</TreeRow>
    </ul>
)

function Layer({ layer, active, onPick }) {
    return (
        <LayerRow $active={active} onClick={onPick}>
            {layer.group
                ? <Fold>{!layer.top && <i />}</Fold>
                : <Swatch $color={layer.color}>{active && <Icon name="pencil" />}</Swatch>}
            <EyeButton $off={layer.off} aria-label={`显示 ${layer.name}`}>
                <Icon name={layer.off ? 'eyeOff' : 'eye'} />
            </EyeButton>
            <LayerName>{layer.name}</LayerName>
            <LockButton $locked={layer.locked} aria-label={`锁定 ${layer.name}`}>
                <Icon name={layer.locked ? 'lock' : 'unlock'} />
            </LockButton>
        </LayerRow>
    )
}

const Fox = () => (
    <svg width="98" height="50" viewBox="0 0 98 50" aria-hidden="true">
        <path d="M0 50q30-14 98-8v8z" fill="#7db356" />
        <path d="M18 50V10M12 50V20M8 50q-2-10 0-16 6 6 5 16M24 50q-4-10 4-14-1 8 1 14" stroke="#5c9a5a" fill="#5c9a5a" strokeWidth="1" />
        <g fill="#f3d34a">
            <circle cx="22" cy="9" r="4" /><circle cx="12" cy="21" r="4" /><circle cx="23" cy="25" r="4" /><circle cx="88" cy="22" r="2" />
        </g>
        <circle cx="9" cy="14" r="3" fill="#7cc7e8" />
        <path d="M57 12l3-4 2 4 4-1-2 4 3 3-5-1-3 3-1-4-4-1z" fill="#cf86e6" />
        <path d="M33 10l4 3h8l4-4v11l-4 5q4 3 14 2l8-4q9-8 20 4l1 5q-7 2-13-4-1 5-8 6l-1 11h-3l-1-9-9-1-1 11h-3l-1-10-2 9h-3l-1-16-2-7q-4-4-3-13z" fill="#f58a4b" />
        <path d="M79 27q8-3 9 6-7 1-9-6z" fill="#b4553a" />
        <path d="M36 17h1M43 17h1" stroke="#322" strokeWidth="2" />
        <g fill="#f0a52e"><circle cx="77" cy="44" r="5" /><circle cx="90" cy="40" r="5" /></g>
        <circle cx="77" cy="44" r="2" fill="#a86a14" /><circle cx="90" cy="40" r="2" fill="#a86a14" />
    </svg>
)

export default function App() {
    const [current, setCurrent] = useState('1 顶层')

    return (
        <Page>
            <GlobalStyle />
            <TitleBar>
                <Logo><Icon name="cloud" size={32} />嘉立创EDA</Logo>
                {MENU.map(m => <MenuItem key={m} $active={m === '放置'}>{m}</MenuItem>)}
                <WindowButtons>
                    <WindowButton aria-label="语言"><Icon name="flag" size={22} /></WindowButton>
                    <WindowButton aria-label="设置"><Icon name="gear" /></WindowButton>
                    <WindowButton aria-label="最小化"><Icon name="minimize" size={22} /></WindowButton>
                    <WindowButton aria-label="还原"><Icon name="restore" size={20} /></WindowButton>
                    <WindowButton aria-label="关闭"><Icon name="close" size={20} /></WindowButton>
                </WindowButtons>
            </TitleBar>

            <Toolbar>
                <MenuTool $tight aria-label="新建"><Icon name="newBoard" /><Caret /></MenuTool>
                {['folder', 'save', 'history', 'undo'].map(n => <Tool key={n} aria-label={n}><Icon name={n} /></Tool>)}
                {['redo', 'tiles'].map(n => <Tool key={n} $off aria-label={n}><Icon name={n} /></Tool>)}
                <Tool aria-label="查找"><Icon name="find" /></Tool>
                <Divider />
                <Tool>2D</Tool>
                <Tool>3D</Tool>
                <Tool aria-label="框选"><Icon name="marquee" /></Tool>
                <Tool aria-label="旋转"><Icon name="rotate" /></Tool>
                <Dropdown label="亮度" value="正常亮度" width={104} gap={3} />
                <Dropdown label="单位" value="mm" width={71} gap={11} />
                <Tool aria-label="网格"><Icon name="grid" /></Tool>
                <Divider />
                <Tool aria-label="过孔"><Icon name="via" /></Tool>
                <Tool aria-label="焊盘"><Icon name="pad" /></Tool>
                {DRAW_TOOLS.map(n => <MenuTool key={n} aria-label={n}><Icon name={n} /><Caret /></MenuTool>)}
                <Tool aria-label="文本"><Icon name="text" /></Tool>
                <MenuTool aria-label="尺寸"><Icon name="measure" /><Caret /></MenuTool>
                <Divider />
                <Tool aria-label="导入"><Icon name="importIn" /></Tool>
                <Tool $small>DRC</Tool>
                <Tool aria-label="布线"><Icon name="route" /></Tool>
                <Tool aria-label="分支"><Icon name="branch" /></Tool>
                <Dropdown label="拐角" value="线条45" width={104} gap={2} />
                <Divider />
                <MenuTool $off aria-label="对齐"><Icon name="align" /><Caret /></MenuTool>
                <MenuTool $off aria-label="分布"><Icon name="distribute" /><Caret /></MenuTool>
                <Tool $off aria-label="水平翻转"><Icon name="flipL" /></Tool>
                <Tool $off aria-label="垂直翻转"><Icon name="flipR" /></Tool>
                <Divider />
                {['gerber', 'target', 'cart', 'gear'].map(n => <Tool key={n} aria-label={n}><Icon name={n} /></Tool>)}
            </Toolbar>

            <Main>
                <SideTabs>
                    <PinBox aria-label="固定"><Icon name="pin" size={16} /></PinBox>
                    {['图页', '常用库', '网络', '元件', '对象'].map((t, i) => <SideTab key={t} $active={i === 0}>{t}</SideTab>)}
                </SideTabs>
                <TreePanel>
                    <TreeSearch>
                        <FilterButton aria-label="过滤"><Icon name="filter" /></FilterButton>
                        <SearchIcon><Icon name="search" /></SearchIcon>
                        <SearchBox aria-label="搜索" />
                        <StepButton aria-label="上一个"><Icon name="up" /></StepButton>
                        <StepButton aria-label="下一个"><Icon name="down" /></StepButton>
                    </TreeSearch>
                    <Tree />
                    <ScrollX />
                </TreePanel>
                <Splitter $w={6}><Handle aria-label="收起"><Arrow $dir="left" /></Handle></Splitter>

                <Work>
                    <DocTabs>
                        <DocTab $w={43} aria-label="工程"><Icon name="folder" /></DocTab>
                        <DocTab $w={199}><Icon name="file" />GD32E230C8T6.GD…</DocTab>
                        <DocTab $w={200} $active><PcbIcon /><span>*<em>GD32E230C8T6</em></span></DocTab>
                    </DocTabs>
                    <Sheet>
                        <HorizontalRuler />
                        <VerticalRuler />
                        <Canvas />
                    </Sheet>
                </Work>
                <Splitter $w={9}><Handle aria-label="收起"><Arrow $dir="right" /></Handle></Splitter>

                <RightColumn>
                    <RightTop>
                        <LayerPanel>
                            <LayerTop>
                                <Dropdown label="图层方案" value="默认" width={167} />
                                <ResetButton>重置</ResetButton>
                                <Icon name="layers" size={22} />
                            </LayerTop>
                            <LayerTabs>
                                <LayerTab $active>所有层</LayerTab>
                                <LayerTab>铜箔层</LayerTab>
                                <LayerTab $last>非铜层</LayerTab>
                            </LayerTabs>
                            <LayerScroll>
                                <LayerList>
                                    {LAYERS.map(l => (
                                        <Layer
                                            key={l.name}
                                            layer={l}
                                            active={l.name === current}
                                            onPick={() => !l.group && setCurrent(l.name)}
                                        />
                                    ))}
                                </LayerList>
                                <ScrollY />
                            </LayerScroll>
                        </LayerPanel>
                        <SideTabs $right>
                            <PinBox $right aria-label="固定"><Icon name="pin" size={16} /></PinBox>
                            {['图层', '过滤', '属性'].map((t, i) => <SideTab key={t} $right $active={i === 0}>{t}</SideTab>)}
                        </SideTabs>
                    </RightTop>
                    <Status>
                        <dt>S</dt><dd>130%</dd><dt>G</dt><dd>0.127, 0.127mm</dd>
                        <dt>X</dt><dd>105.283mm</dd><dt>dX</dt><dd>22.479mm</dd>
                        <dt>Y</dt><dd>19.177mm</dd><dt>dY</dt><dd>6.477mm</dd>
                    </Status>
                </RightColumn>
            </Main>

            <BottomSplit><Handle $flat aria-label="展开"><Arrow $dir="up" /></Handle></BottomSplit>
            <BottomTabs>
                <BottomPin aria-label="固定"><Icon name="pin" size={16} /></BottomPin>
                <BottomTab $w={92} $active>元件库</BottomTab>
                <BottomTab $w={90}><RedDot />日志</BottomTab>
                <BottomTab $w={90}>DRC</BottomTab>
                <BottomTab $w={105}>查找结果</BottomTab>
            </BottomTabs>

            <Taskbar>
                <TaskButton $w={60} aria-label="开始"><Icon name="windows" /></TaskButton>
                <SearchField>
                    <Icon name="magnify" />
                    <input aria-label="搜索" placeholder="在这里输入你要搜索的内容" />
                    <Fox />
                </SearchField>
                <TaskButton $w={60} aria-label="Cortana"><Icon name="cortana" /></TaskButton>
                <TaskButton aria-label="任务视图"><Icon name="taskView" /></TaskButton>
                <TaskButton aria-label="便笺"><Icon name="note" size={26} /></TaskButton>
                <TaskButton aria-label="Everything"><Icon name="everything" size={28} /></TaskButton>
                <TaskButton aria-label="同步"><Icon name="sync" size={27} /></TaskButton>
                <TaskButton aria-label="文件资源管理器"><RunMark><Icon name="explorer" size={28} /></RunMark></TaskButton>
                <TaskButton $active aria-label="嘉立创EDA"><Icon name="edaPro" size={30} /></TaskButton>
                <TaskButton aria-label="微信"><RunMark><Icon name="wechat" size={30} /></RunMark></TaskButton>
                <TaskButton aria-label="录屏"><RunMark><Icon name="camera" size={27} /></RunMark></TaskButton>
                <Tray>
                    <TaskButton $w={60} aria-label="输入法"><Icon name="sogou" /></TaskButton>
                    <TraySpace />
                    <Weather><Icon name="moon" size={28} /><span>27°C</span><span>多云</span></Weather>
                    {['chevUp', 'penguin', 'shield', 'battery', 'wifi', 'speaker'].map(n => (
                        <TrayButton key={n} aria-label={n}><Icon name={n} size={18} /></TrayButton>
                    ))}
                    <Clock>20:42<br />2022-7-3</Clock>
                    <TaskButton $w={68} aria-label="通知"><Icon name="notice" /></TaskButton>
                </Tray>
            </Taskbar>
            <Meter><i /></Meter>
        </Page>
    )
}
